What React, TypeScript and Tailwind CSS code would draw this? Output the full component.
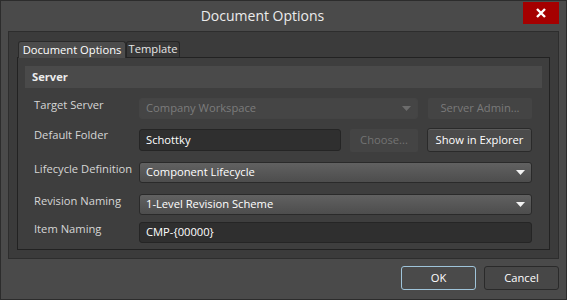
const font = { fontFamily: '"Open Sans", "Noto Sans", sans-serif' };

function Caret({ color }: { color: string }) {
  return (
    <svg width="9" height="5" viewBox="0 0 9 5" className="shrink-0">
      <path d="M0 0h9L4.5 5z" fill={color} />
    </svg>
  );
}

function Combo({ value, disabled, width }: { value: string; disabled?: boolean; width: string }) {
  return (
    <div
      className={`${width} h-[21px] flex items-center justify-between pl-[6px] pr-[6px] rounded-[3px] border whitespace-nowrap ${
        disabled
          ? 'border-[#444] bg-[#454545] text-[#7c7c7c]'
          : 'border-[#2a2a2a] bg-gradient-to-b from-[#616161] to-[#4d4d4d] text-white'
      }`}
    >
      <span>{value}</span>
      <Caret color={disabled ? '#6c6c6c' : '#f2f2f2'} />
    </div>
  );
}

function Field({ value, width }: { value: string; width: string }) {
  return (
    <div className={`${width} flex items-center pl-[6px] rounded-[3px] border border-[#252525] bg-[#2f2f2f] text-white whitespace-nowrap`}>
      {value}
    </div>
  );
}

function Row({ label, mt, children }: { label: string; mt: string; children: React.ReactNode }) {
  return (
    <div className={`flex items-start ${mt}`}>
      <div className="w-[105px] shrink-0 text-[#d6d6d6] leading-[16px] -mt-[1px] whitespace-nowrap">{label}</div>
      <div className="flex items-center">{children}</div>
    </div>
  );
}

export default function App() {
  return (
    <div
      className="w-[567px] h-[300px] bg-[#4a4a4a] border border-[#2c2c2c] flex flex-col text-[11.2px] overflow-hidden"
      style={font}
    >
      {/* Title bar */}
      <div className="relative h-[30px] shrink-0 flex items-center justify-center pr-[42px]">
        <span className="text-[#ececec] text-[14px] -mt-[1px]">Document Options</span>
        <button className="absolute right-[7px] top-[1px] w-[36px] h-[22px] bg-[#a50000] flex items-center justify-center">
          <svg width="10" height="10" viewBox="0 0 10 10">
            <path d="M1 1l8 8M9 1l-8 8" stroke="#fff" strokeWidth="2.4" />
          </svg>
        </button>
      </div>

      {/* Outer panel */}
      <div className="mx-[7px] h-[228px] shrink-0 bg-[#3b3b3b] border border-[#2d2d2d] px-[8px] pt-[8px] pb-[8px] flex flex-col">
        {/* Tabs */}
        <div className="flex items-end h-[17px] shrink-0 pl-[1px] whitespace-nowrap">
          <div className="h-[17px] w-[108px] bg-[#4c4c4c] border border-b-0 border-[#2a2a2a] rounded-t-[3px] flex items-center justify-center text-white -mb-[1px] z-10">
            Document Options
          </div>
          <div className="h-[16px] w-[54px] bg-[#383838] border border-b-0 border-[#262626] rounded-t-[3px] flex items-center justify-center text-[#e6e6e6]">
            Template
          </div>
        </div>

        {/* Tab page */}
        <div className="flex-1 bg-[#3e3e3e] border border-[#222] px-[7px] pt-[8px] flex flex-col">
          <div className="h-[22px] bg-[#4a4a4a] flex items-center pl-[7px] font-bold text-[#ededed]">Server</div>

          <div className="px-[9px]">
            <Row label="Target Server" mt="mt-[10px]">
              <Combo value="Company Workspace" disabled width="w-[279px]" />
              <button className="ml-[10px] w-[104px] h-[21px] bg-[#444] text-[#7a7a7a] rounded-[2px] whitespace-nowrap">Server Admin...</button>
            </Row>

            <Row label="Default Folder" mt="mt-[9px]">
              <Field value="Schottky" width="w-[202px] h-[22px]" />
              <button className="ml-[9px] w-[68px] h-[23px] bg-[#444] text-[#737373] rounded-[2px]">Choose...</button>
              <button className="ml-[9px] w-[105px] h-[24px] bg-[#4b4b4b] border border-[#2a2a2a] rounded-[3px] text-white shadow-[inset_0_1px_0_#5a5a5a] whitespace-nowrap">
                Show in Explorer
              </button>
            </Row>

            <Row label="Lifecycle Definition" mt="mt-[10px]">
              <Combo value="Component Lifecycle" width="w-[393px]" />
            </Row>

            <Row label="Revision Naming" mt="mt-[11px]">
              <Combo value="1-Level Revision Scheme" width="w-[393px]" />
            </Row>

            <Row label="Item Naming" mt="mt-[7px]">
              <Field value="CMP-{00000}" width="w-[393px] h-[21px]" />
            </Row>
          </div>
        </div>
      </div>

      {/* Footer */}
      <div className="flex justify-end gap-[8px] mt-[7px] mr-[7px]">
        <button className="w-[75px] h-[24px] rounded-[3px] bg-[#4a4a4a] border border-[#9fc4da] text-white">OK</button>
        <button className="w-[75px] h-[24px] rounded-[3px] bg-[#474747] border border-[#2a2a2a] text-white">Cancel</button>
      </div>
    </div>
  );
}
